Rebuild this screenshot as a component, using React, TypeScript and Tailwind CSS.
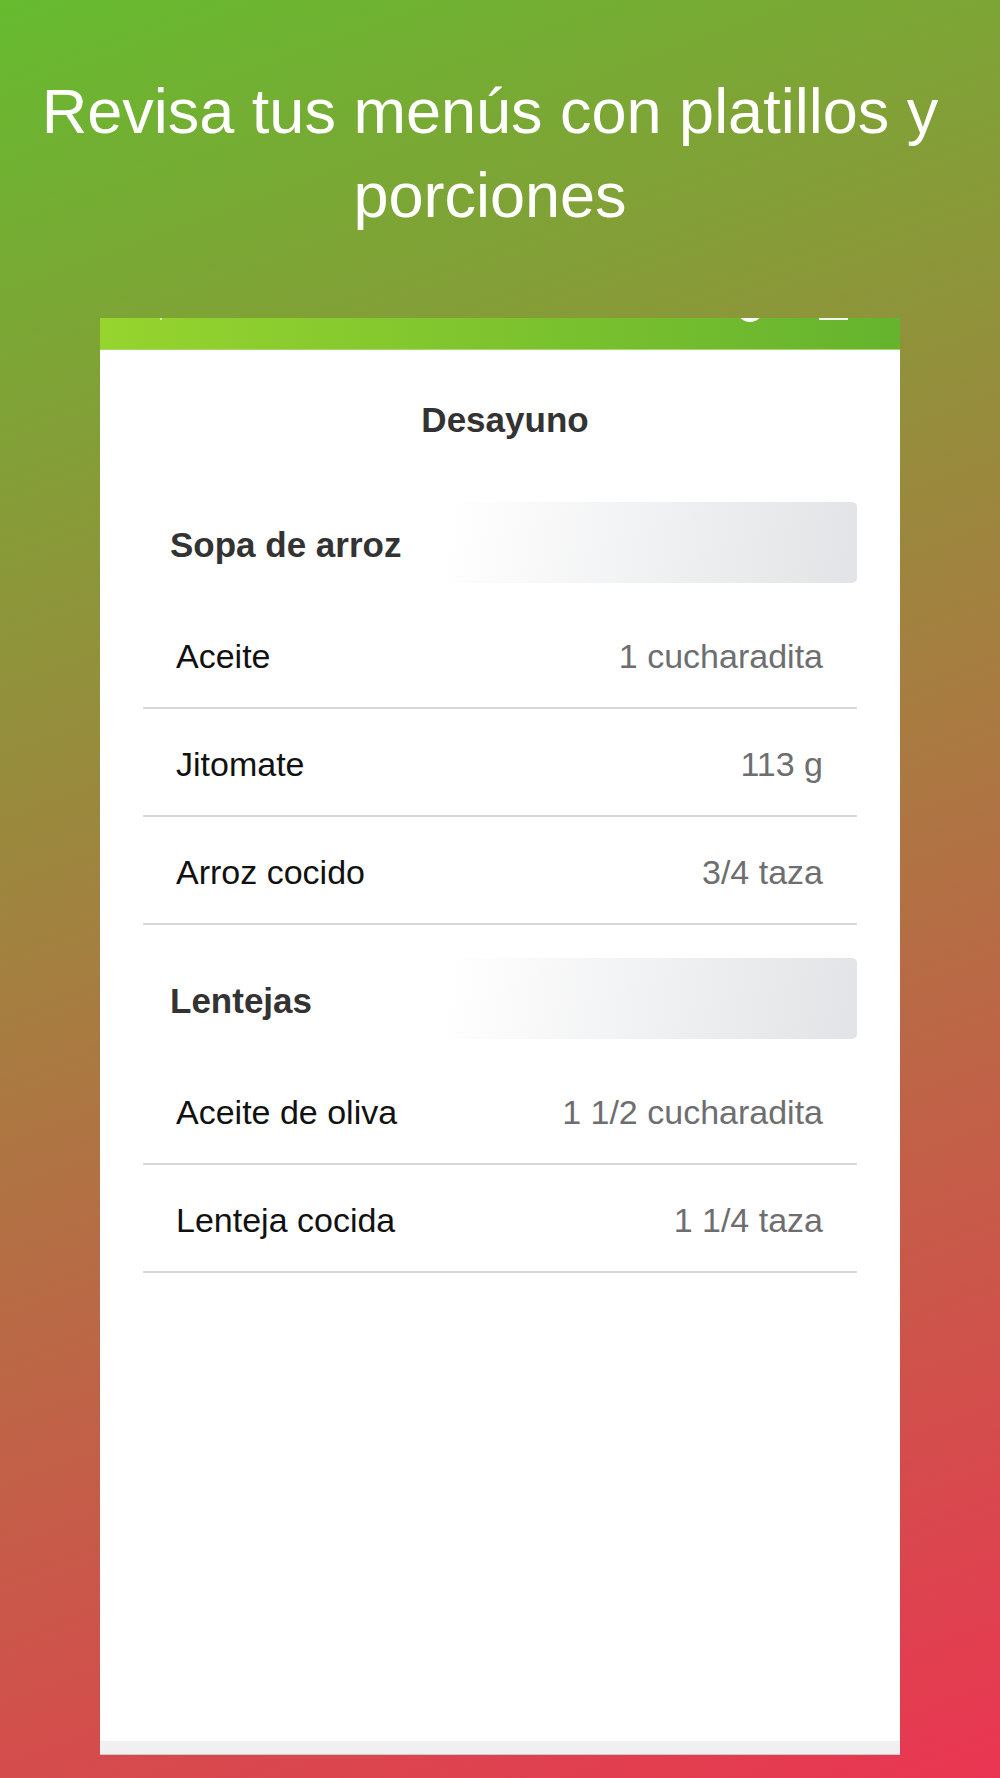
const MENU = [
  {
    name: 'Sopa de arroz',
    items: [
      { food: 'Aceite', amount: '1 cucharadita' },
      { food: 'Jitomate', amount: '113 g' },
      { food: 'Arroz cocido', amount: '3/4 taza' },
    ],
  },
  {
    name: 'Lentejas',
    items: [
      { food: 'Aceite de oliva', amount: '1 1/2 cucharadita' },
      { food: 'Lenteja cocida', amount: '1 1/4 taza' },
    ],
  },
];

export default function App() {
  return (
    <div className="h-[1778px] flex flex-col bg-[linear-gradient(160deg,#66bb2f_0%,#a97a41_50%,#ea3552_100%)] font-['Liberation_Sans',Arial,sans-serif]">
      <h1 className="pt-[69px] pr-5 text-center text-[63px] leading-[84px] font-normal text-white">
        Revisa tus menús con platillos y porciones
      </h1>

      <div className="mt-[81px] mb-[23px] mx-[100px] flex-1 flex flex-col bg-white border-b border-[#c8c8c8]">
        {/* cropped status bar of the phone */}
        <div className="relative h-[32px] overflow-hidden bg-gradient-to-r from-[#96d42e] to-[#65b32e] border-b border-[#a6db62]">
          <div className="absolute left-[60px] top-0 w-[2px] h-[2px] bg-white/60" />
          <div className="absolute left-[637px] top-[-22px] w-[26px] h-[26px] rounded-full bg-white" />
          <div className="absolute left-[719px] top-0 w-[29px] h-[2px] bg-white/90" />
        </div>

        <div className="flex-1 px-[43px]">
          <h2 className="pt-[50px] text-center text-[35px] leading-[40px] font-bold text-[#333333] pl-[10px]">
            Desayuno
          </h2>

          <div className="mt-[62px]">
            {MENU.map((dish, i) => (
              <div key={dish.name} className={i > 0 ? 'mt-[33px]' : ''}>
                <div className="h-[81px] flex items-center pl-[27px] pt-1 rounded-[5px] bg-[linear-gradient(100deg,#ffffff_42%,#e2e3e6_100%)]">
                  <span className="text-[35px] leading-none font-bold text-[#333333]">{dish.name}</span>
                </div>
                <div className="mt-[18px]">
                  {dish.items.map((item) => (
                    <div
                      key={item.food}
                      className="h-[108px] flex items-center justify-between pl-[33px] pr-[34px] pt-1 border-b-2 border-[#d6d7d9]"
                    >
                      <span className="text-[34px] leading-none text-[#111111]">{item.food}</span>
                      <span className="text-[34px] leading-none text-[#6e6e70]">{item.amount}</span>
                    </div>
                  ))}
                </div>
              </div>
            ))}
          </div>
        </div>

        <div className="h-[13px] bg-[#f0f0f0]" />
      </div>
    </div>
  );
}
